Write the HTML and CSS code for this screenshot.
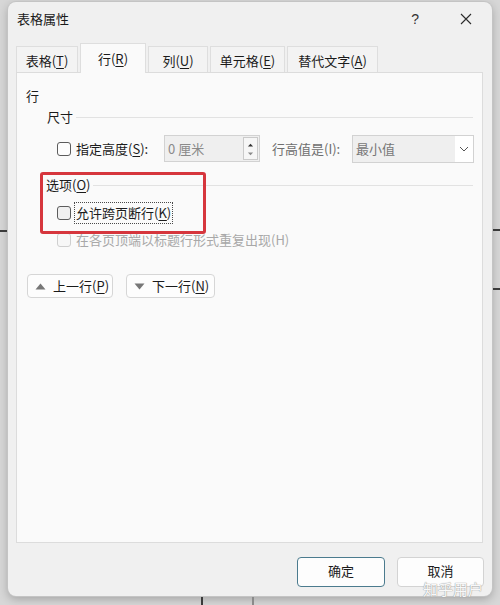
FILE: index.html
```html
<!DOCTYPE html>
<html lang="zh-CN">
<head>
<meta charset="utf-8">
<title>表格属性</title>
<link rel="stylesheet" href="styles.css">
</head>
<body>
<div class="desk">
  <div class="bg-line h-left"></div>
  <div class="bg-line h-right1"></div>
  <div class="bg-line h-right2"></div>
  <div class="bg-line v-bot1"></div>
  <div class="bg-line v-bot2"></div>

  <div class="dialog">
    <div class="titlebar">
      <span class="title">表格属性</span>
      <span class="help">?</span>
      <span class="close">
        <svg width="12" height="12" viewBox="0 0 12 12"><path d="M1 1 L11 11 M11 1 L1 11" stroke="#2b2b2b" stroke-width="1.1" fill="none"/></svg>
      </span>
    </div>

    <div class="tabs">
      <div class="tab t1">表格(<u>T</u>)</div>
      <div class="tab t2 active">行(<u>R</u>)</div>
      <div class="tab t3">列(<u>U</u>)</div>
      <div class="tab t4">单元格(<u>E</u>)</div>
      <div class="tab t5">替代文字(<u>A</u>)</div>
    </div>

    <div class="panel">
      <div class="heading">行</div>

      <div class="group size-group"><span>尺寸</span><span class="rule"></span></div>

      <div class="row size-row">
        <span class="cb"></span>
        <span class="lbl1">指定高度(<u>S</u>):</span>
        <span class="input">
          <span class="input-text">0 厘米</span>
          <span class="spin">
            <svg width="15" height="23" viewBox="0 0 15 23"><path d="M4.5 8 L7.5 5 L10.5 8 Z" fill="#333"/><path d="M4.5 15 L7.5 18 L10.5 15 Z" fill="#8a8a8a"/></svg>
          </span>
        </span>
        <span class="lbl2">行高值是(I):</span>
        <span class="select">
          <span class="select-text">最小值</span>
          <span class="drop">
            <svg width="10" height="6" viewBox="0 0 10 6"><path d="M1 1 L5 5 L9 1" stroke="#555" stroke-width="1" fill="none"/></svg>
          </span>
        </span>
      </div>

      <div class="group opt-group"><span>选项(<u>O</u>)</span><span class="rule"></span></div>

      <div class="row check-row">
        <span class="cb cb-grey"></span>
        <span class="focus">允许跨页断行(<u>K</u>)</span>
      </div>

      <div class="row check-row disabled">
        <span class="cb cb-disabled"></span>
        <span class="dis-text">在各页顶端以标题行形式重复出现(H)</span>
      </div>

      <div class="nav-buttons">
        <button class="nav-btn prev">
          <svg width="11" height="7" viewBox="0 0 11 7"><path d="M0.5 6.5 L5.5 0.5 L10.5 6.5 Z" fill="#777"/></svg>
          <span>上一行(<u>P</u>)</span>
        </button>
        <button class="nav-btn next">
          <svg width="11" height="7" viewBox="0 0 11 7"><path d="M0.5 0.5 L5.5 6.5 L10.5 0.5 Z" fill="#777"/></svg>
          <span>下一行(<u>N</u>)</span>
        </button>
      </div>
    </div>

    <div class="footer">
      <button class="dlg-btn ok">确定</button>
      <button class="dlg-btn cancel">取消</button>
    </div>
  </div>

  <div class="highlight"></div>
  <div class="watermark">知乎用户</div>
</div>
</body>
</html>
```

FILE: styles.css
```css
* { box-sizing: border-box; }

html, body {
  margin: 0;
  padding: 0;
}

body {
  width: 500px;
  height: 605px;
  overflow: hidden;
  background: #d7d7d7;
  font-family: "Noto Sans CJK SC", "Noto Sans", "Liberation Sans", sans-serif;
  font-size: 13px;
  line-height: 18px;
  color: #1b1b1b;
}

u { text-decoration: underline; text-underline-offset: 2px; text-decoration-thickness: 1px; }

.desk {
  position: relative;
  width: 500px;
  height: 605px;
  padding-top: 2px;
  padding-left: 8px;
}

.bg-line { position: absolute; background: #3a3a3a; }
.h-left { left: 0; top: 230px; width: 7px; height: 2px; }
.h-right1 { left: 493px; top: 229px; width: 7px; height: 2px; }
.h-right2 { left: 493px; top: 288px; width: 7px; height: 2px; }
.v-bot1 { left: 201px; top: 597px; width: 2px; height: 8px; }
.v-bot2 { left: 252px; top: 597px; width: 2px; height: 8px; background: #8a8a8a; }

.dialog {
  width: 484px;
  height: 594px;
  background: #f0f0f0;
  border-radius: 8px;
  box-shadow: 0 0 0 1px #c4c4c4, 0 3px 10px rgba(0,0,0,0.25);
  display: flex;
  flex-direction: column;
}

.titlebar {
  height: 33px;
  display: flex;
  align-items: center;
  padding-left: 9px;
  padding-right: 20px;
}
.title { flex: 1; font-size: 13px; color: #1a1a1a; }
.help {
  font-family: "Liberation Sans", sans-serif;
  font-size: 14px;
  color: #333;
  margin-right: 41px;
}
.close { display: flex; width: 12px; height: 12px; }

.tabs {
  height: 37px;
  padding-top: 8px;
  padding-left: 8px;
  display: flex;
  align-items: flex-end;
  gap: 2px;
}
.tab {
  height: 26px;
  background: #f3f3f3;
  border: 1px solid #dedede;
  border-bottom: none;
  display: flex;
  justify-content: center;
  align-items: center;
  padding-top: 2px;
  color: #1b1b1b;
}
.tab.active {
  height: 30px;
  margin-bottom: -1px;
  background: #fafafa;
  position: relative;
  z-index: 1;
  padding-top: 0;
}
.t1 { width: 62px; }
.t2 { width: 66px; }
.t3 { width: 60px; }
.t4 { width: 75px; }
.t5 { width: 91px; }

.panel {
  height: 471px;
  margin-left: 8px;
  margin-right: 9px;
  background: #fafafa;
  border: 1px solid #dcdcdc;
  padding: 0 9px;
  display: flex;
  flex-direction: column;
}

.heading { margin-top: 14px; height: 18px; }

.group {
  display: flex;
  align-items: center;
  height: 18px;
}
.group .rule {
  flex: 1;
  height: 1px;
  background: #e2e2e2;
  margin-left: 3px;
}
.size-group { margin-top: 3px; margin-left: 21px; }
.opt-group { margin-top: 14px; margin-left: 20px; }

.row { display: flex; align-items: center; }

.size-row { margin-top: 9px; height: 27px; margin-left: 31px; }

.cb {
  width: 14px;
  height: 14px;
  border: 1px solid #5c5c5c;
  border-radius: 3px;
  background: #fdfdfd;
  margin-right: 5px;
  flex: none;
}
.cb-grey { background: #f0f0f0; margin-right: 3px; }
.cb-disabled { border-color: #cfcfcf; background: #f7f7f7; margin-right: 5px; }

.lbl1 { width: 88px; flex: none; }
.lbl2 { width: 80px; margin-left: 12px; flex: none; color: #6e6e6e; }

.input {
  width: 96px;
  height: 27px;
  flex: none;
  background: #efefef;
  border: 1px solid #d2d2d2;
  display: flex;
  align-items: center;
  padding-left: 3px;
  padding-right: 1px;
}
.input-text { flex: 1; color: #8a8a8a; }
.spin {
  width: 15px;
  height: 23px;
  border: 1px solid #cacaca;
  background: #f6f6f6;
  display: flex;
}
.spin svg { display: block; }

.select {
  width: 122px;
  height: 28px;
  flex: none;
  background: #efefef;
  border: 1px solid #d2d2d2;
  display: flex;
  align-items: center;
  padding-left: 3px;
}
.select-text { flex: 1; color: #777; }
.drop {
  width: 18px;
  height: 26px;
  background: #ffffff;
  display: flex;
  align-items: center;
  justify-content: center;
}

.check-row { margin-left: 31px; height: 18px; }
.opt-group + .check-row { margin-top: 10px; }
.check-row.disabled { margin-top: 9px; }
.focus {
  border: 1px dotted #4a4a4a;
  padding: 1px 1px;
  line-height: 18px;
}
.dis-text { color: #a8a8a8; }

.nav-buttons {
  margin-top: 25px;
  margin-left: 1px;
  display: flex;
  gap: 13px;
}
.nav-btn {
  height: 24px;
  font: inherit;
  color: #1b1b1b;
  background: #fdfdfd;
  border: 1px solid #d6d6d6;
  border-radius: 4px;
  display: flex;
  align-items: center;
  padding: 0 0 0 7px;
  gap: 7px;
}
.nav-btn.prev { width: 86px; }
.nav-btn.next { width: 89px; }
.nav-btn svg { display: block; }

.footer {
  margin-top: 14px;
  display: flex;
  justify-content: flex-end;
  gap: 12px;
  padding-right: 8px;
}
.dlg-btn {
  height: 30px;
  font: inherit;
  color: #1b1b1b;
  background: #fdfdfd;
  border: 1px solid #d3d3d3;
  border-radius: 4px;
  padding: 0 0 2px 0;
}
.dlg-btn.ok { width: 88px; border-color: #4b7b8e; }
.dlg-btn.cancel { width: 87px; }

.highlight {
  position: absolute;
  left: 40px;
  top: 172px;
  width: 166px;
  height: 62px;
  border: 3px solid #d6363d;
  border-radius: 3px;
}

.watermark {
  position: absolute;
  left: 423px;
  top: 581px;
  font-size: 15px;
  line-height: 15px;
  color: rgba(255,255,255,0.95);
  text-shadow: 0 0 1px #9a9a9a, 0 0 1px #9a9a9a;
}
```
